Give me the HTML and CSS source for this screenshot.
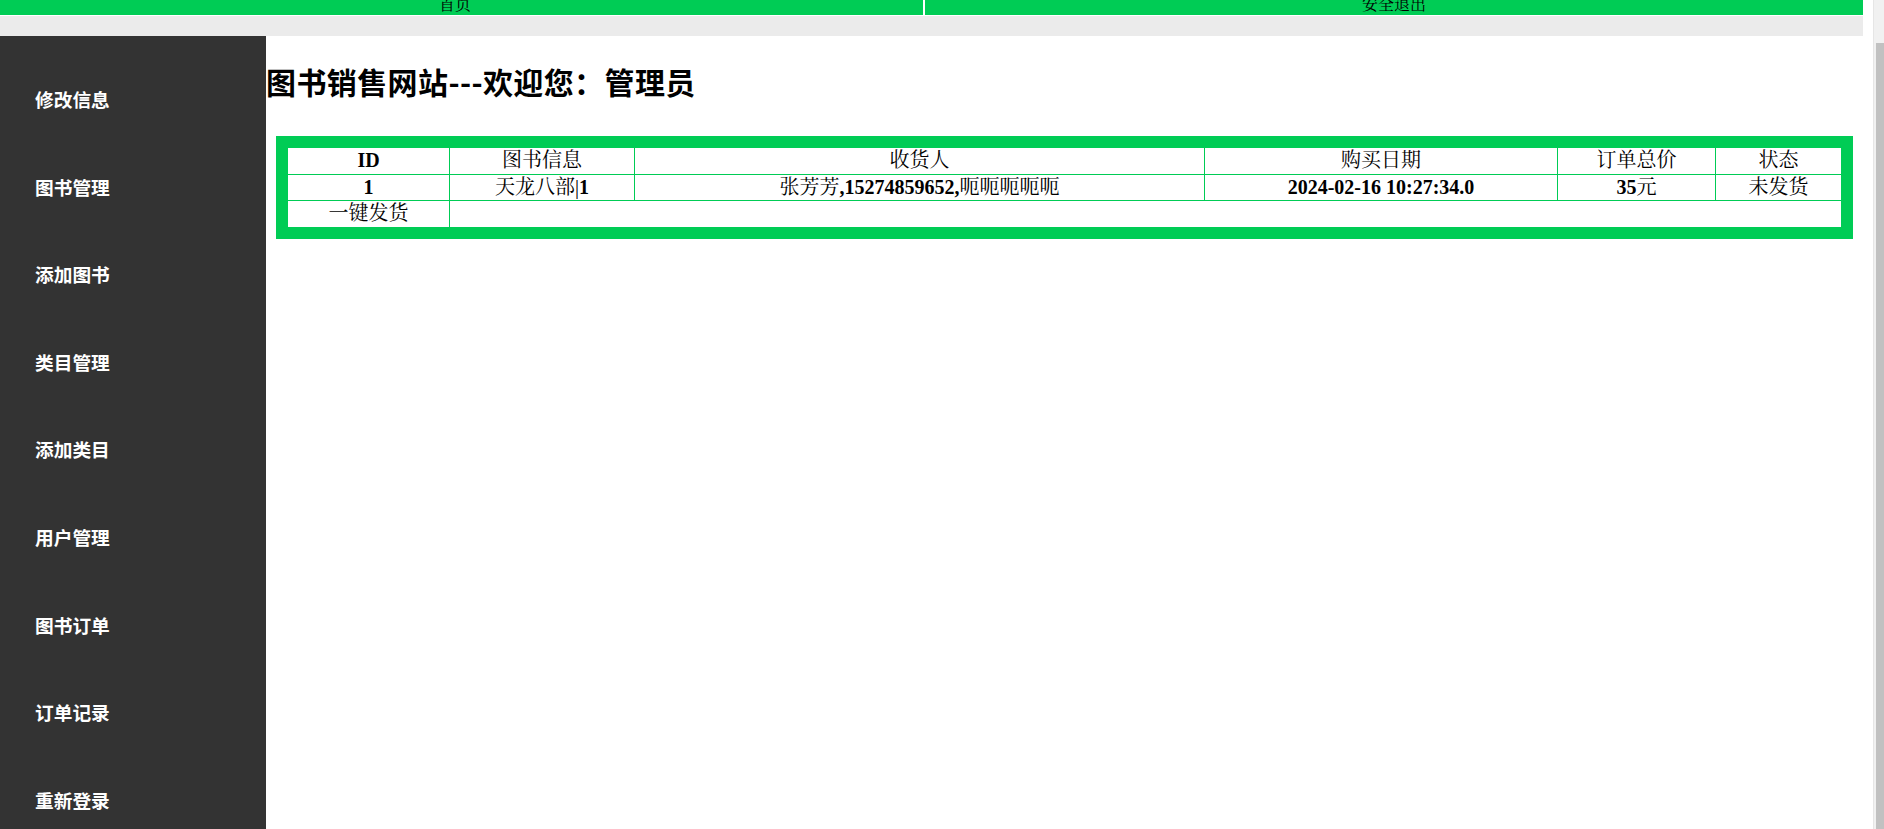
FILE: index.html
```html
<!DOCTYPE html>
<html lang="zh-CN">
<head>
    <meta charset="UTF-8">
    <meta name="viewport" content="width=device-width, initial-scale=1.0">
    <title>图书销售网站 - 图书订单</title>
    <link rel="stylesheet" href="styles.css">
</head>
<body>
    <div class="page">
        <div class="topnav">
            <a class="nav-item nav-home" href="#">首页</a>
            <a class="nav-item" href="#">安全退出</a>
        </div>
        <div class="subbar"></div>

        <div class="wrap">
            <div class="side">
                <ul>
                    <li>修改信息</li>
                    <li>图书管理</li>
                    <li>添加图书</li>
                    <li>类目管理</li>
                    <li>添加类目</li>
                    <li>用户管理</li>
                    <li>图书订单</li>
                    <li>订单记录</li>
                    <li>重新登录</li>
                </ul>
            </div>

            <div class="main">
                <h1 class="title">图书销售网站---欢迎您：管理员</h1>

                <table class="orders">
                    <colgroup>
                        <col class="c-id">
                        <col class="c-book">
                        <col class="c-person">
                        <col class="c-date">
                        <col class="c-price">
                        <col class="c-state">
                    </colgroup>
                    <tr>
                        <th><b>ID</b></th>
                        <th>图书信息</th>
                        <th>收货人</th>
                        <th>购买日期</th>
                        <th>订单总价</th>
                        <th>状态</th>
                    </tr>
                    <tr>
                        <td><b>1</b></td>
                        <td>天龙八部|<b>1</b></td>
                        <td>张芳芳<b>,15274859652,</b>呃呃呃呃呃</td>
                        <td><b>2024-02-16 10:27:34.0</b></td>
                        <td><b>35</b>元</td>
                        <td>未发货</td>
                    </tr>
                    <tr>
                        <td>一键发货</td>
                        <td colspan="5"></td>
                    </tr>
                </table>
            </div>
        </div>
    </div>

    <!-- window scrollbar as it showed in the capture -->
    <div class="scrollbar" aria-hidden="true"><div class="thumb"></div></div>

    <script src="script.js"></script>
</body>
</html>
```

FILE: styles.css
```css
body {
    margin: 0;
    font-family: "Liberation Serif", "Noto Serif CJK SC", "Noto Sans CJK SC", serif;
    font-size: 16px;
    color: #000;
    background-color: #fff;
}

.page {
    margin-right: 21px;
}

.topnav {
    display: grid;
    grid-template-columns: 923px 1fr;
    column-gap: 2px;
    height: 60px;
    border-bottom: 1px solid #fff;
}

.nav-item {
    background-color: #00cc55;
    color: #000;
    text-decoration: none;
    text-align: center;
    padding-top: 40px;
    line-height: 20px;
}

.nav-home {
    padding-right: 13px;
}

.subbar {
    height: 20px;
    background-color: #ebebeb;
}

.wrap {
    display: flex;
}

.side {
    width: 266px;
    flex-shrink: 0;
    height: 793px;
    background-color: #333;
    overflow: hidden;
}

.side ul {
    list-style: none;
    margin: 0;
    padding: 19px 0 0 35px;
}

.side li {
    height: 87.6px;
    line-height: 87.6px;
    font-family: "Noto Sans CJK SC", sans-serif;
    font-size: 18.72px;
    font-weight: bold;
    color: #fff;
}

.main {
    flex: 1;
}

.title {
    margin: 25px 0 35px;
    font-family: "Noto Sans CJK SC", sans-serif;
    font-size: 30px;
    line-height: 40px;
    font-weight: bold;
    letter-spacing: 0.4px;
}

.orders {
    width: calc(100% - 20px);
    margin: 0 10px;
    border: 12px solid #00cc55;
    border-spacing: 0;
    table-layout: fixed;
}

.c-id { width: 162px; }
.c-book { width: 185px; }
.c-person { width: 570px; }
.c-date { width: 353px; }
.c-price { width: 158px; }
.c-state { width: 125px; }

.orders th, .orders td {
    padding: 2px 1px;
    font-size: 20px;
    line-height: 21.67px;
    text-align: center;
    font-weight: normal;
    border-right: 1px solid #00cc55;
    border-bottom: 1px solid #00cc55;
    white-space: nowrap;
}

.orders tr > :last-child {
    border-right: none;
}

.orders tr:last-child > * {
    border-bottom: none;
}

.scrollbar {
    position: fixed;
    top: 0;
    right: 0;
    bottom: 0;
    width: 10px;
    background-color: #f1f1f1;
    border-left: 1px solid #e6e6e6;
}

.thumb {
    margin: 43px 0 0 2px;
    height: calc(100% - 43px);
    background-color: #c1c1c1;
}
```

FILE: script.js
```js
// page was viewed scrolled to the bottom
function toBottom() {
    window.scrollTo(0, document.documentElement.scrollHeight);
}

toBottom();
window.addEventListener('load', toBottom);
```
